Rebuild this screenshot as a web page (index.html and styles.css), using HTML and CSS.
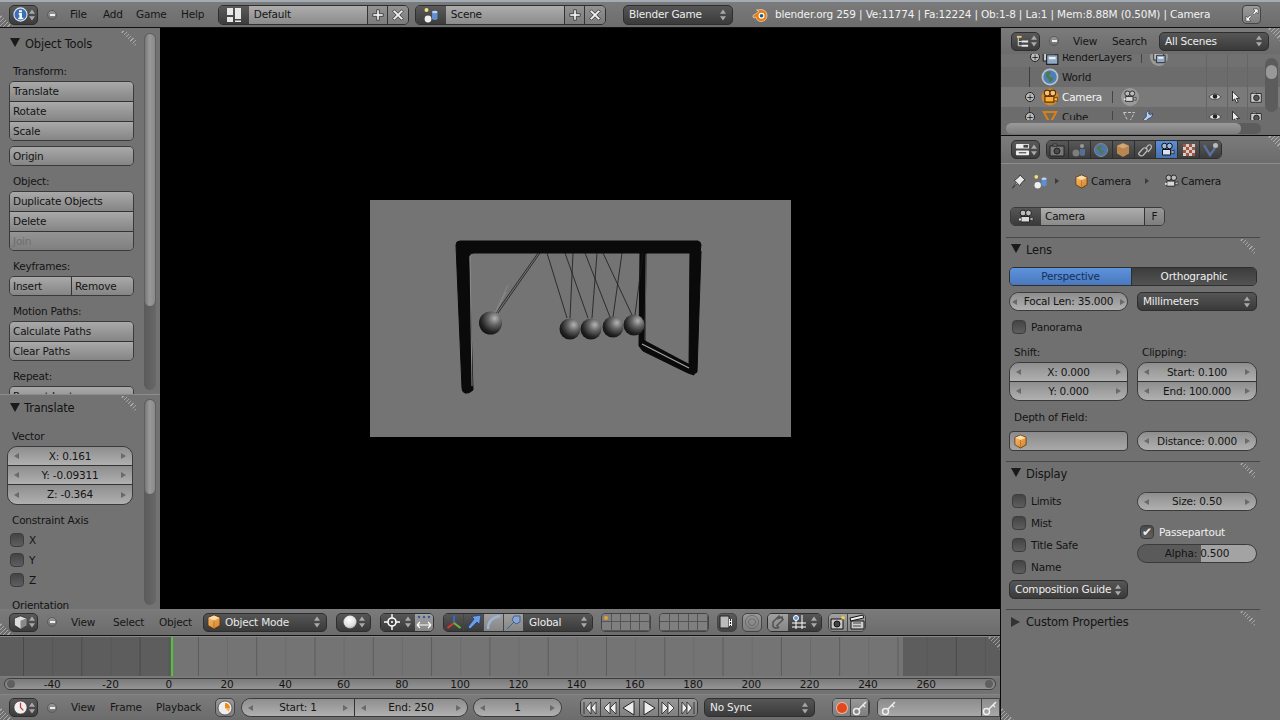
FILE: index.html
```html
<!DOCTYPE html>
<html lang="en">
<head>
<meta charset="utf-8">
<title>Blender</title>
<link rel="stylesheet" href="styles.css">
</head>
<body>
<svg class="defs" width="0" height="0" aria-hidden="true">
  <defs>
    <linearGradient id="gCube" x1="0" y1="0" x2="1" y2="1"><stop offset="0" stop-color="#f6c078"/><stop offset="1" stop-color="#d9801e"/></linearGradient>
    <radialGradient id="gBall" cx=".68" cy=".3" r=".8"><stop offset="0" stop-color="#b4b4b4"/><stop offset=".35" stop-color="#666"/><stop offset=".75" stop-color="#222"/><stop offset="1" stop-color="#0e0e0e"/></radialGradient>
    <radialGradient id="gWhite" cx=".45" cy=".35" r=".7"><stop offset="0" stop-color="#fff"/><stop offset=".7" stop-color="#ddd"/><stop offset="1" stop-color="#999"/></radialGradient>
    <symbol id="ud" viewBox="0 0 8 14"><path d="M4 0.5 7.500 5.500H.5Z M4 13.500 .5 8.500H7.500Z" fill="#a9a9a9"/></symbol>
    <symbol id="plus" viewBox="0 0 16 16"><path d="M6.500 2h3v4.500H14v3H9.500V14h-3V9.500H2v-3h4.500z" fill="#f0f0f0" stroke="#2a2a2a" stroke-width=".9"/></symbol>
    <symbol id="cross" viewBox="0 0 16 16"><path d="M4 2 8 6l4-4 2 2-4 4 4 4-2 2-4-4-4 4-2-2 4-4-4-4z" fill="#f0f0f0" stroke="#2a2a2a" stroke-width=".9"/></symbol>
    <symbol id="info" viewBox="0 0 16 16"><circle cx="8" cy="8" r="7" fill="#3d6fb5" stroke="#dfe7f2" stroke-width="1.200"/><path d="M6.500 3.500h3v2h-3z M6 6.500h3.500v5H11V13H5.600v-1.500h1.200V8H6z" fill="#fff"/></symbol>
    <symbol id="layout" viewBox="0 0 16 16"><path d="M1 1h6v7H1z M9 1h6v11H9z M1 10h6v5H1z M9 13.500h6V15H9z" fill="#e8e8e8"/></symbol>
    <symbol id="scene" viewBox="0 0 16 16"><circle cx="3.500" cy="3" r="2" fill="#f1e27a"/><circle cx="5" cy="12" r="3.400" fill="#f0f0f0"/><path d="M9 5q3-2 5.500 0v7q-2.700 2-5.500 0z" fill="#5f8fd0"/><ellipse cx="11.800" cy="5" rx="2.700" ry="1.300" fill="#bcd3ef"/></symbol>
    <symbol id="cube" viewBox="0 0 16 16"><path d="M8 1 14 3.500V11.500L8 15 2 11.500V3.500Z" fill="url(#gCube)" stroke="#4b3216" stroke-width=".8"/><path d="M2.500 4 8 6.500 13.500 4 8 1.500Z" fill="#fbdca8"/><path d="M8 6.500V14.500" stroke="#a8661c" stroke-width=".7"/></symbol>
    <symbol id="cam" viewBox="0 0 16 16"><circle cx="5" cy="4" r="2.900" fill="#bbb" stroke="#222"/><circle cx="10.500" cy="4" r="2.900" fill="#bbb" stroke="#222"/><path d="M3 7.500h8.500v5.500H3z" fill="#d8d8d8" stroke="#222"/><path d="M11.500 9.500 15 8v4l-3.500-1.500z" fill="#bbb" stroke="#222" stroke-width=".7"/><path d="M1 9.500h2v2H1z" fill="#ddd"/></symbol>
    <symbol id="camo" viewBox="0 0 16 16"><circle cx="8" cy="8" r="7.500" fill="#d98a2c"/><circle cx="5.500" cy="4.500" r="2.600" fill="#f7c27a" stroke="#5b3305"/><circle cx="10.500" cy="4.500" r="2.600" fill="#f7c27a" stroke="#5b3305"/><path d="M3.500 7.500h8v5h-8z" fill="#fbb03c" stroke="#5b3305"/><path d="M11.500 9 14.500 8v4l-3-1z" fill="#fbb03c" stroke="#5b3305" stroke-width=".7"/></symbol>
    <symbol id="camb" viewBox="0 0 16 16"><circle cx="5.500" cy="4" r="2.800" fill="#9db9de" stroke="#111"/><circle cx="10.500" cy="4" r="2.800" fill="#9db9de" stroke="#111"/><path d="M3.500 7.500h8v5.500h-8z" fill="#d7e3f3" stroke="#111"/><path d="M11.500 9.500 15 8v4l-3.500-1.500z" fill="#bbb" stroke="#111" stroke-width=".7"/></symbol>
    <symbol id="world" viewBox="0 0 16 16"><circle cx="8" cy="8" r="7.500" fill="#b9c0cc"/><circle cx="8" cy="8" r="6" fill="#4d80b8"/><path d="M5 3.500q3-1 4 1l-2 1.500 1 2 3 1-1.500 3-2 .5-1-3-2.500-2z" fill="#4f7a47"/></symbol>
    <symbol id="rl" viewBox="0 0 16 16"><path d="M2 2.500h11v9H2z" fill="#c9c9c9" stroke="#222"/><path d="M5 6h10v8.500H5z" fill="#8ea8c7" stroke="#222"/><path d="M7 8h6v2H7z" fill="#eee"/></symbol>
    <symbol id="eye" viewBox="0 0 16 16"><path d="M1 8q7-7 14 0q-7 6-14 0z" fill="#eee" stroke="#222" stroke-width=".7"/><circle cx="8" cy="7.500" r="2.600" fill="#222"/></symbol>
    <symbol id="cursor" viewBox="0 0 16 16"><path d="M4 1.500v11l2.500-2.500 2 4.500 2-1-2-4h3.500z" fill="#eee" stroke="#111" stroke-width=".9"/></symbol>
    <symbol id="rend" viewBox="0 0 16 16"><path d="M2 4h12v10H2z" fill="#cfcfcf" stroke="#222"/><path d="M4 2.500h4V4H4z" fill="#cfcfcf" stroke="#222" stroke-width=".6"/><circle cx="8.500" cy="9" r="3.200" fill="#555" stroke="#222"/></symbol>
    <symbol id="tri" viewBox="0 0 16 16"><path d="M2.500 3.500h11L8 14z" fill="#8a6a3a" fill-opacity=".35" stroke="#d9801e" stroke-width="1.800"/></symbol>
    <symbol id="triw" viewBox="0 0 16 16"><path d="M2.500 3.500h11L8 14z" fill="none" stroke="#c8c8c8" stroke-width="1" stroke-dasharray="3 1.500"/></symbol>
    <symbol id="wrench" viewBox="0 0 16 16"><path d="M3 14.500 9.500 7q-1.500-4 3-5.500l-1 3 2 1.500 2-2q.5 4.500-4 5.500L5 15.500z" fill="#b8d0ef" stroke="#23406b" stroke-width=".8"/></symbol>
    <symbol id="pin" viewBox="0 0 16 16"><path d="M1.500 15 6 9 3.500 6.500 5.500 5.500 9 2.500 9.500 1 15 6.500 13.500 7 10.500 10.500 9.500 12.500 7 10z" fill="#e8e8e8" stroke="#222" stroke-width=".8"/></symbol>
    <symbol id="fs" viewBox="0 0 16 16"><path d="M9 2h5v5l-1.700-1.700-2.300 2.300-1.300-1.300 2.300-2.300z M2 14V9l1.700 1.700 2.300-2.300 1.300 1.300-2.300 2.300L7 14z" fill="#fff" stroke="#222" stroke-width=".5"/></symbol>
    <symbol id="logo" viewBox="0 0 16 16"><path d="M1 8.500 7 4.500 4.500 3 9.500 2.500Q15 3.500 15 9 14.500 14 9.500 14.500 4.500 14.500 4 10L2 11Q.5 10.500 1 8.500z" fill="#e87d0d" stroke="#fff" stroke-width=".5"/><circle cx="9.500" cy="8.800" r="3" fill="#fff"/><circle cx="9.500" cy="8.800" r="1.800" fill="#265787"/></symbol>
    <symbol id="outl" viewBox="0 0 16 16"><path d="M2 2h5v2H2z" fill="#f0c878"/><path d="M3.500 4v8.500M3.500 8H7M3.500 12.500H7" stroke="#ddd" fill="none"/><path d="M7 7h7v2H7z M7 11.500h7v2H7z" fill="#e8e8e8"/></symbol>
    <symbol id="props" viewBox="0 0 16 16"><rect x="1" y="2" width="14" height="5" rx="1" fill="#eee"/><rect x="9" y="3" width="5" height="3" fill="#444"/><rect x="1" y="9" width="14" height="5" rx="1" fill="#eee"/><path d="M4 11.500h8" stroke="#222"/></symbol>
    <symbol id="view3d" viewBox="0 0 16 16"><path d="M8 1 14.500 3.500V11L8 15 1.500 11V3.500Z" fill="#ddd" stroke="#222" stroke-width=".7"/><path d="M8 6V15L14.500 11V3.500Z" fill="#888"/></symbol>
    <symbol id="clock" viewBox="0 0 16 16"><circle cx="8" cy="8" r="7" fill="#efefef" stroke="#333" stroke-width=".7"/><path d="M8 3v5l3 3" stroke="#c33" fill="none" stroke-width="1.300"/></symbol>
    <symbol id="ball" viewBox="0 0 16 16"><circle cx="8" cy="8" r="6.500" fill="url(#gWhite)"/></symbol>
    <symbol id="pivot" viewBox="0 0 16 16"><circle cx="8" cy="8" r="4" fill="none" stroke="#fff" stroke-width="1.600"/><path d="M8 0v4M8 12v4M0 8h4M12 8h4" stroke="#fff" stroke-width="1.400"/><circle cx="8" cy="8" r="1" fill="#fff"/></symbol>
    <symbol id="around" viewBox="0 0 16 16"><circle cx="3" cy="3" r="1.300" fill="#3a5d96"/><circle cx="8" cy="3" r="1.300" fill="#3a5d96"/><circle cx="13" cy="3" r="1.300" fill="#3a5d96"/><path d="M1 11h14M1 11l3-3M1 11l3 3M15 11l-3-3M15 11l-3 3" stroke="#fff" stroke-width="1.200" fill="none"/></symbol>
    <symbol id="axes" viewBox="0 0 16 16"><path d="M8 9V1.500" stroke="#3569c8" stroke-width="2"/><path d="M8 9 1.500 14" stroke="#d83a2c" stroke-width="2"/><path d="M8 9l6.500 5" stroke="#6fb53a" stroke-width="2"/></symbol>
    <symbol id="arrow" viewBox="0 0 16 16"><path d="M2 13l2 2 7-7 2.500 2.500L15 1 5.500 2.500 8 5z" fill="#6f9be0" stroke="#1d3d75" stroke-width=".8"/></symbol>
    <symbol id="arc" viewBox="0 0 16 16"><path d="M2 15Q2 4 14 2" fill="none" stroke="#9bb4d8" stroke-width="2.400"/></symbol>
    <symbol id="scale" viewBox="0 0 16 16"><path d="M1 15 8 8 6 6 8 2 14 2 14 8 10 10 8 8" fill="#87a6d6" stroke="#43618f"/></symbol>
    <symbol id="laylink" viewBox="0 0 16 16"><path d="M1 2h9v12H1z" fill="#bbb" stroke="#222"/><path d="M11.500 5v7" stroke="#fff" stroke-width="3"/><path d="M11.500 5v7" stroke="#222" stroke-width="1.200" stroke-dasharray="2 1"/></symbol>
    <symbol id="prop" viewBox="0 0 16 16"><circle cx="8" cy="8" r="6.500" fill="none" stroke="#6a6a6a"/><circle cx="8" cy="8" r="3.500" fill="none" stroke="#6a6a6a"/></symbol>
    <symbol id="magnet" viewBox="0 0 16 16"><path d="M3 8 9 2l4 3.500-6 6 1.500 2Q5 15 3 12.500z M7 5l5-2 1 3" fill="none" stroke="#555" stroke-width="1.600"/></symbol>
    <symbol id="snap" viewBox="0 0 16 16"><path d="M5 1v14M11 1v14M1 9h14M1 13h14" stroke="#fff"/><circle cx="5" cy="4" r="2.500" fill="#6a95d6" stroke="#fff"/></symbol>
    <symbol id="rcam" viewBox="0 0 16 16"><path d="M1 5h12v10H1z" fill="#c8c8c8" stroke="#111"/><circle cx="7" cy="10" r="3" fill="#444" stroke="#111"/><path d="M13 1l.8 1.700 1.700.3-1.300 1.300.3 1.700-1.500-.9-1.500.9.300-1.700L10.500 3l1.700-.3z" fill="#f5d24a"/></symbol>
    <symbol id="clap" viewBox="0 0 16 16"><path d="M2 7h13v8H2z" fill="#ccc" stroke="#111"/><path d="M1 4 14 1l.7 3L1.700 7z" fill="#eee" stroke="#111"/><path d="M4 9h8M4 12h8" stroke="#444"/></symbol>
    <symbol id="key" viewBox="0 0 16 16"><circle cx="4.500" cy="11.500" r="3" fill="none" stroke="#eee" stroke-width="1.500"/><path d="M6.500 9.500 14 2M11 5l2 2" stroke="#eee" stroke-width="1.500" fill="none"/></symbol>
    <symbol id="keying" viewBox="0 0 16 16"><circle cx="8" cy="8" r="7" fill="#eee" stroke="#333" stroke-width=".7"/><path d="M8 3a5 5 0 0 1 5 5H8z" fill="#e88b1a"/><path d="M8 8h5a5 5 0 0 1-1.500 3.500z" fill="#f3b45a"/></symbol>
    <symbol id="t-render" viewBox="0 0 16 16"><path d="M1 4h14v10H1z" fill="#7a7a7a" stroke="#222"/><path d="M4 2h4v2H4z" fill="#7a7a7a" stroke="#222" stroke-width=".7"/><circle cx="8" cy="9" r="3" fill="#4a4a4a" stroke="#222"/></symbol>
    <symbol id="t-layers" viewBox="0 0 16 16"><circle cx="11" cy="4" r="2" fill="#999"/><circle cx="5" cy="11" r="3.500" fill="#7e7e7e"/><path d="M9 7h5v6q-2.500 2-5 0z" fill="#566e94"/></symbol>
    <symbol id="t-world" viewBox="0 0 16 16"><circle cx="8" cy="8" r="6.500" fill="#4d77a8" stroke="#888"/><path d="M5 4q3-1 4 1l-2 1 1 2 3 1-1.500 3-2 0-1-3-2.500-2z" fill="#56754f"/></symbol>
    <symbol id="t-obj" viewBox="0 0 16 16"><path d="M8 1 14 3.500V11.500L8 15 2 11.500V3.500Z" fill="#b98650"/><path d="M2.500 4 8 6.500 13.500 4 8 1.500Z" fill="#d2a877"/></symbol>
    <symbol id="t-link" viewBox="0 0 16 16"><path d="M2 11 6 6.500q2-1.500 3.500 0t0 3L6 13.500q-2 1-3.500-.5T2 11z M8.500 7 11 3.500q2-1.500 3 0t0 3L11 10" fill="none" stroke="#bcbcbc" stroke-width="1.200"/></symbol>
    <symbol id="t-tex" viewBox="0 0 16 16"><path d="M2 2h12v12H2z" fill="#cfcfcf"/><path d="M2 2h3v3H2z M8 2h3v3H8z M5 5h3v3H5z M11 5h3v3h-3z M2 8h3v3H2z M8 8h3v3H8z M5 11h3v3H5z M11 11h3v3h-3z" fill="#a8553f"/></symbol>
    <symbol id="t-part" viewBox="0 0 16 16"><path d="M1 3 7 13 12 6" fill="none" stroke="#5a6ea0" stroke-width="2.400"/><circle cx="12.500" cy="3.500" r="2.500" fill="#bbb"/></symbol>
    <symbol id="tstart" viewBox="0 0 16 16"><path d="M2 2v12M14 2 9 8l5 6zM9 2 4 8l5 6z" fill="#eee" stroke="#222" stroke-width=".8"/></symbol>
    <symbol id="tback" viewBox="0 0 16 16"><path d="M8 2 2 8l6 6zM14 2 8 8l6 6z" fill="#eee" stroke="#222" stroke-width=".8"/></symbol>
    <symbol id="tprev" viewBox="0 0 16 16"><path d="M13 1 2 8l11 7z" fill="#eee" stroke="#222"/></symbol>
    <symbol id="tnext" viewBox="0 0 16 16"><path d="M3 1l11 7-11 7z" fill="#eee" stroke="#222"/></symbol>
    <symbol id="tfwd" viewBox="0 0 16 16"><path d="M8 2l6 6-6 6zM2 2l6 6-6 6z" fill="#eee" stroke="#222" stroke-width=".8"/></symbol>
    <symbol id="tend" viewBox="0 0 16 16"><path d="M14 2v12M2 2l5 6-5 6zM7 2l5 6-5 6z" fill="#eee" stroke="#222" stroke-width=".8"/></symbol>
  </defs>
</svg>

<div class="app">
  <header class="hdr top">
    <span class="hatch corner"></span>
    <div class="sel"><svg class="ic"><use href="#info"/></svg><svg class="ud"><use href="#ud"/></svg></div>
    <span class="minus"></span>
    <nav class="menus">
      <span class="m w33">File</span><span class="m w33">Add</span><span class="m w45">Game</span><span class="m w37">Help</span>
    </nav>
    <div class="dbgroup">
      <span class="dbico"><svg class="ic"><use href="#layout"/></svg></span><span class="dbname">Default</span><span class="dbbtn"><svg class="ic"><use href="#plus"/></svg></span><span class="dbbtn end"><svg class="ic"><use href="#cross"/></svg></span>
    </div>
    <div class="dbgroup scene">
      <span class="dbico"><svg class="ic"><use href="#scene"/></svg></span><span class="dbname">Scene</span><span class="dbbtn"><svg class="ic"><use href="#plus"/></svg></span><span class="dbbtn end"><svg class="ic"><use href="#cross"/></svg></span>
    </div>
    <div class="dd engine"><span>Blender Game</span><svg class="ud"><use href="#ud"/></svg></div>
    <svg class="ic logo"><use href="#logo"/></svg>
    <span class="stats">blender.org 259 | Ve:11774 | Fa:12224 | Ob:1-8 | La:1 | Mem:8.88M (0.50M) | Camera</span>
    <span class="fsbtn"><svg class="ic"><use href="#fs"/></svg></span>
  </header>

  <main class="main">
    <section class="left">
      <div class="view">
        <aside class="tools">
          <div class="tpanel tp1">
            <div class="tcontent">
              <div class="ptitle"><i class="tdown"></i>Object Tools<span class="hatch phatch"></span></div>
              <div class="lbl lfirst">Transform:</div>
              <div class="bgroup"><div class="b">Translate</div><div class="b">Rotate</div><div class="b">Scale</div></div>
              <div class="bgroup sp5"><div class="b">Origin</div></div>
              <div class="lbl sp5">Object:</div>
              <div class="bgroup"><div class="b">Duplicate Objects</div><div class="b">Delete</div><div class="b off">Join</div></div>
              <div class="lbl sp5">Keyframes:</div>
              <div class="bgroup bh"><div class="b">Insert</div><div class="b">Remove</div></div>
              <div class="lbl sp5">Motion Paths:</div>
              <div class="bgroup"><div class="b">Calculate Paths</div><div class="b">Clear Paths</div></div>
              <div class="lbl sp5">Repeat:</div>
              <div class="bgroup"><div class="b">Repeat Last</div></div>
            </div>
            <div class="vtrack t1"><div class="vthumb th1"></div></div>
          </div>
          <div class="tpanel tp2">
            <div class="tcontent">
              <div class="ptitle pt2"><i class="tdown"></i>Translate<span class="hatch phatch"></span></div>
              <div class="lbl vec lfirst">Vector</div>
              <div class="numg vecg">
                <div class="num"><i class="la"></i><span>X: 0.161</span><i class="ra"></i></div>
                <div class="num"><i class="la"></i><span>Y: -0.09311</span><i class="ra"></i></div>
                <div class="num"><i class="la"></i><span>Z: -0.364</span><i class="ra"></i></div>
              </div>
              <div class="lbl vec sp5">Constraint Axis</div>
              <label class="chk tchk"><i class="box"></i>X</label>
              <label class="chk tchk"><i class="box"></i>Y</label>
              <label class="chk tchk"><i class="box"></i>Z</label>
              <div class="lbl vec sp5">Orientation</div>
            </div>
            <div class="vtrack t2"><div class="vthumb th2"></div></div>
          </div>
        </aside>
        <div class="canvas">
          <svg class="render" viewBox="370 200 421 237" width="421" height="237">
            <g fill="#0a0a0a" stroke="#0a0a0a" stroke-width="1" stroke-linejoin="round">
              <path d="M456 245Q456 241 460 241H698Q701 242 701 245L700 253H474Q469 253 469 258L473 390Q469 394 465 393 462 392 462 388Z"/>
              <path d="M690 251H701L697 372 694 374 689 372Z"/>
              <path d="M640 252H646L645 341 692 366 694 375 688 373 643 351 639 346Z"/>
            </g>
            <path d="M470 256 472 386" stroke="#8e8e8e" fill="none"/>
            <path d="M642 344 689 368" stroke="#a5a5a5" fill="none" stroke-width="1.200"/>
            <path d="M646 254 645 340" stroke="#555" fill="none"/>
            <g stroke="#1a1a1a" stroke-width=".8" fill="none">
              <path d="M540 253 498 313M538 253 495 314M547 253 567 318M573 253 570 318M565 253 588 318M597 253 592 318M585 253 610 317M622 253 613 317M603 253 632 315M643 253 635 315"/>
              <path d="M508 285 495 313M506 292 496 312" stroke="#8d8d8d"/>
            </g>
            <circle cx="490.500" cy="323" r="11.500" fill="url(#gBall)"/>
            <circle cx="570" cy="329" r="10.500" fill="url(#gBall)"/>
            <circle cx="591" cy="329" r="10.500" fill="url(#gBall)"/>
            <circle cx="613" cy="327" r="10.500" fill="url(#gBall)"/>
            <circle cx="634" cy="325" r="10.500" fill="url(#gBall)"/>
          </svg>
        </div>
      </div>

      <div class="hdr h3d">
        <span class="hatch corner"></span>
        <div class="sel"><svg class="ic"><use href="#view3d"/></svg><svg class="ud"><use href="#ud"/></svg></div>
        <span class="minus"></span>
        <nav class="menus m14">
          <span class="m w42">View</span><span class="m w46">Select</span><span class="m w44">Object</span>
        </nav>
        <div class="dd objmode"><svg class="ic"><use href="#cube"/></svg><span>Object Mode</span><svg class="ud"><use href="#ud"/></svg></div>
        <div class="dd shade"><svg class="ic"><use href="#ball"/></svg><svg class="ud"><use href="#ud"/></svg></div>
        <div class="pivotg">
          <span class="dark pv"><svg class="ic"><use href="#pivot"/></svg><svg class="ud"><use href="#ud"/></svg></span><span class="lt"><svg class="ic"><use href="#around"/></svg></span>
        </div>
        <div class="mani">
          <span class="dark ms"><svg class="ic"><use href="#axes"/></svg></span><span class="dark ms"><svg class="ic"><use href="#arrow"/></svg></span><span class="lt ms"><svg class="ic"><use href="#arc"/></svg></span><span class="lt ms"><svg class="ic"><use href="#scale"/></svg></span><span class="dark gl"><span>Global</span><svg class="ud"><use href="#ud"/></svg></span>
        </div>
        <div class="layers l1"><i class="on"></i><i></i><i></i><i></i><i></i><i></i><i></i><i></i><i></i><i></i></div>
        <div class="layers l2"><i></i><i></i><i></i><i></i><i></i><i></i><i></i><i></i><i></i><i></i></div>
        <span class="sq dsq linkb"><svg class="ic"><use href="#laylink"/></svg></span>
        <span class="sq propb"><svg class="ic"><use href="#prop"/></svg></span>
        <div class="snapg">
          <span class="lt sn"><svg class="ic"><use href="#magnet"/></svg></span><span class="dark sn2"><svg class="ic"><use href="#snap"/></svg><svg class="ud"><use href="#ud"/></svg></span>
        </div>
        <div class="renderg">
          <span class="lt sn"><svg class="ic"><use href="#rcam"/></svg></span><span class="lt sn"><svg class="ic"><use href="#clap"/></svg></span>
        </div>
      </div>

      <div class="timeline"><span class="playhead"></span><span class="hatch tlcorner"></span></div>
      <div class="ruler">
        <div class="rbar"></div>
        <div class="rlabels">
          <span>-40</span><span>-20</span><span>0</span><span>20</span><span>40</span><span>60</span><span>80</span><span>100</span><span>120</span><span>140</span><span>160</span><span>180</span><span>200</span><span>220</span><span>240</span><span>260</span>
        </div>
      </div>

      <div class="hdr htime">
        <span class="hatch corner"></span>
        <div class="sel"><svg class="ic"><use href="#clock"/></svg><svg class="ud"><use href="#ud"/></svg></div>
        <span class="minus"></span>
        <nav class="menus m14">
          <span class="m w39">View</span><span class="m w46">Frame</span><span class="m w59">Playback</span>
        </nav>
        <span class="sq keying"><svg class="ic"><use href="#keying"/></svg></span>
        <div class="numh range">
          <div class="num"><i class="la"></i><span>Start: 1</span><i class="ra"></i></div>
          <div class="num"><i class="la"></i><span>End: 250</span><i class="ra"></i></div>
        </div>
        <div class="numh cur">
          <div class="num"><i class="la"></i><span>1</span><i class="ra"></i></div>
        </div>
        <div class="transport">
          <span><svg><use href="#tstart"/></svg></span><span><svg><use href="#tback"/></svg></span><span><svg><use href="#tprev"/></svg></span><span><svg><use href="#tnext"/></svg></span><span><svg><use href="#tfwd"/></svg></span><span><svg><use href="#tend"/></svg></span>
        </div>
        <div class="dd sync"><span>No Sync</span><svg class="ud"><use href="#ud"/></svg></div>
        <div class="recg">
          <span class="rec"><i></i></span><span class="rec"><svg class="ic"><use href="#key"/></svg></span>
        </div>
        <div class="keyf"><span class="kname"><svg class="ic"><use href="#key"/></svg></span><span class="kend"><svg class="ic"><use href="#key"/></svg></span></div>
      </div>
    </section>

    <section class="right">
      <div class="hdr outh">
        <span class="hatch rcorner"></span>
        <div class="sel"><svg class="ic"><use href="#outl"/></svg><svg class="ud"><use href="#ud"/></svg></div>
        <span class="minus"></span>
        <nav class="menus m14">
          <span class="m w39">View</span><span class="m w47">Search</span>
        </nav>
        <div class="dd scenes"><span>All Scenes</span><svg class="ud"><use href="#ud"/></svg></div>
      </div>
      <div class="tree">
        <div class="trow first">
          <span class="exp e2"></span><svg class="ic"><use href="#rl"/></svg><span class="nm">RenderLayers</span><span class="ex"><i class="sepv"></i><span class="halo"><svg class="ic"><use href="#rl"/></svg></span></span><span class="rc"></span><span class="rc"></span><span class="rc"></span>
        </div>
        <div class="trow alt">
          <span class="exp none"></span><svg class="ic"><use href="#world"/></svg><span class="nm">World</span><span class="ex"></span><span class="rc"></span><span class="rc"></span><span class="rc"></span>
        </div>
        <div class="trow act">
          <span class="exp"></span><svg class="ic"><use href="#camo"/></svg><span class="nm wh">Camera</span><span class="ex"><i class="sepv"></i><span class="halo"><svg class="ic"><use href="#cam"/></svg></span></span><span class="rc"><svg class="ic sm"><use href="#eye"/></svg></span><span class="rc"><svg class="ic sm"><use href="#cursor"/></svg></span><span class="rc"><svg class="ic sm"><use href="#rend"/></svg></span>
        </div>
        <div class="trow alt">
          <span class="exp"></span><svg class="ic"><use href="#tri"/></svg><span class="nm">Cube</span><span class="ex"><i class="sepv"></i><svg class="ic mesh"><use href="#triw"/></svg><svg class="ic"><use href="#wrench"/></svg></span><span class="rc"><svg class="ic sm"><use href="#eye"/></svg></span><span class="rc"><svg class="ic sm"><use href="#cursor"/></svg></span><span class="rc"><svg class="ic sm"><use href="#rend"/></svg></span>
        </div>
        <div class="treescroll"><i></i></div>
      </div>
      <div class="hbar"><div class="hthumb"></div></div>
      <div class="hdr proph">
        <span class="hatch rcorner"></span>
        <div class="sel"><svg class="ic"><use href="#props"/></svg><svg class="ud"><use href="#ud"/></svg></div>
        <div class="tabs">
          <span><svg class="ic"><use href="#t-render"/></svg></span><span><svg class="ic"><use href="#t-layers"/></svg></span><span><svg class="ic"><use href="#t-world"/></svg></span><span><svg class="ic"><use href="#t-obj"/></svg></span><span><svg class="ic"><use href="#t-link"/></svg></span><span class="act"><svg class="ic"><use href="#camb"/></svg></span><span><svg class="ic"><use href="#t-tex"/></svg></span><span><svg class="ic"><use href="#t-part"/></svg></span>
        </div>
      </div>
      <div class="props">
        <div class="crumbs">
          <svg class="ic pinp"><use href="#pin"/></svg>
          <svg class="ic scn"><use href="#scene"/></svg>
          <i class="crumbarrow a1"></i>
          <svg class="ic cb"><use href="#cube"/></svg><span class="cname c1">Camera</span>
          <i class="crumbarrow a2"></i>
          <svg class="ic cb2"><use href="#cam"/></svg><span class="cname">Camera</span>
        </div>
        <div class="namerow">
          <span class="nico"><svg class="ic"><use href="#cam"/></svg></span><span class="nfield">Camera</span><span class="nf">F</span>
        </div>

        <div class="panel">
          <div class="ptitle pr"><i class="tdown"></i>Lens<span class="hatch phatch2"></span></div>
          <div class="seg">
            <span class="s-on">Perspective</span><span class="s-off">Orthographic</span>
          </div>
          <div class="cols c6">
            <div class="numg pill"><div class="num tight"><i class="la"></i><span>Focal Len: 35.000</span><i class="ra"></i></div></div>
            <div class="dd full"><span>Millimeters</span><svg class="ud"><use href="#ud"/></svg></div>
          </div>
          <label class="chk pano"><i class="box"></i>Panorama</label>
          <div class="cols c5">
            <div class="plbl">Shift:</div><div class="plbl">Clipping:</div>
          </div>
          <div class="cols">
            <div class="numg duo"><div class="num"><i class="la"></i><span>X: 0.000</span><i class="ra"></i></div><div class="num"><i class="la"></i><span>Y: 0.000</span><i class="ra"></i></div></div>
            <div class="numg duo"><div class="num"><i class="la"></i><span>Start: 0.100</span><i class="ra"></i></div><div class="num"><i class="la"></i><span>End: 100.000</span><i class="ra"></i></div></div>
          </div>
          <div class="plbl dof">Depth of Field:</div>
          <div class="cols c4">
            <div class="objf"><svg class="ic"><use href="#cube"/></svg></div>
            <div class="numg pill p20"><div class="num"><i class="la"></i><span>Distance: 0.000</span><i class="ra"></i></div></div>
          </div>
        </div>

        <div class="panel disp">
          <div class="ptitle pr"><i class="tdown"></i>Display<span class="hatch phatch2"></span></div>
          <div class="cols c8">
            <div class="colv">
              <label class="chk r22"><i class="box"></i>Limits</label>
              <label class="chk r22"><i class="box"></i>Mist</label>
              <label class="chk r22"><i class="box"></i>Title Safe</label>
              <label class="chk r22"><i class="box"></i>Name</label>
              <div class="dd full comp"><span>Composition Guide</span><svg class="ud"><use href="#ud"/></svg></div>
            </div>
            <div class="colv cr">
              <div class="numg pill"><div class="num"><i class="la"></i><span>Size: 0.50</span><i class="ra"></i></div></div>
              <label class="chk pass"><i class="box chkd">&#x2714;</i>Passepartout</label>
              <div class="alpha">Alpha: 0.500</div>
            </div>
          </div>
        </div>

        <div class="panel cust">
          <div class="ptitle pr"><i class="tright"></i>Custom Properties<span class="hatch phatch2"></span></div>
        </div>
        <span class="hatch corner"></span>
      </div>
    </section>
  </main>
</div>
</body>
</html>
```
FILE: styles.css
```css
* { box-sizing: border-box; }
html, body { margin: 0; padding: 0; }
body { width: 1280px; height: 720px; overflow: hidden; background: #727272; font: 10.500px/1 "DejaVu Sans", "Liberation Sans", sans-serif; letter-spacing: -.2px; color: #141414; }
.defs { position: absolute; }
.app { display: flex; flex-direction: column; width: 1280px; height: 720px; }
.main { display: flex; height: 692px; }
.left { width: 1000px; display: flex; flex-direction: column; }
.right { width: 280px; border-left: 1px solid #0c0c0c; position: relative; background: #707070; display: flex; flex-direction: column; }
.ic { width: 16px; height: 16px; flex: none; display: block; }
.ic.sm { width: 14px; height: 14px; }
.ud { width: 8px; height: 12px; flex: none; display: block; }

/* headers */
.hdr { display: flex; align-items: center; position: relative; padding-left: 9px; background: linear-gradient(#7b7b7b, #6c6c6c); border-bottom: 1px solid #111; flex: none; }
.top { height: 28px; border-top: 2px solid #a3abb4; }
.h3d { height: 27px; }
.htime { height: 26px; border-bottom: 0; border-top: 1px solid #858585; }
.outh { height: 26px; border-bottom: 0; padding-left: 10px; }
.proph { height: 28px; padding-left: 10px; border-bottom: 1px solid #8c8c8c; }
.sel { width: 29px; height: 19px; display: flex; align-items: center; justify-content: space-between; padding: 0 1px 0 3px; border: 1px solid #2e2e2e; border-radius: 5px; background: linear-gradient(#5a5a5a, #3c3c3c); flex: none; }
.sel .ic { width: 15px; height: 15px; }
.top .sel, .top .dd, .top .dbgroup { height: 20px; }
.minus { width: 10px; height: 10px; margin-left: 9px; border-radius: 50%; background: linear-gradient(#9a9a9a, #6d6d6d); border: 1px solid #5a5a5a; position: relative; flex: none; }
.minus::after { content: ""; position: absolute; left: 1.500px; right: 1.500px; top: 3px; height: 2px; background: #eee; }
.menus { display: flex; margin-left: 13px; }
.m14 { margin-left: 14px; }
.m { color: #161616; flex: none; }
.w33 { width: 33px; } .w37 { width: 37px; } .w39 { width: 39px; } .w42 { width: 42px; } .w44 { width: 44px; } .w45 { width: 45px; } .w46 { width: 46px; } .w47 { width: 47px; } .w59 { width: 59px; }
.hatch { display: block; background: repeating-linear-gradient(135deg, transparent 0 2px, rgba(235,235,235,.45) 2px 3px); }
.corner { position: absolute; left: 0; bottom: 0; width: 13px; height: 13px; clip-path: polygon(0 0, 100% 100%, 0 100%); }
.rcorner { position: absolute; right: 0; top: 0; width: 13px; height: 13px; clip-path: polygon(0 0, 100% 0, 100% 100%); }

/* top bar */
.dbgroup { display: flex; height: 19px; width: 191px; border: 1px solid #2e2e2e; border-radius: 5px; overflow: hidden; flex: none; }
.scene { margin-left: 6px; }
.dbico { width: 30px; background: linear-gradient(#5a5a5a, #3c3c3c); display: flex; align-items: center; justify-content: center; }
.dbname { width: 120px; background: linear-gradient(#adadad, #8b8b8b); padding-left: 5px; display: flex; align-items: center; border-right: 1px solid #333; }
.dbbtn { width: 20px; background: linear-gradient(#929292, #7c7c7c); display: flex; align-items: center; justify-content: center; border-right: 1px solid #333; }
.dbbtn.end { border-right: 0; }
.dbbtn .ic { width: 14px; height: 14px; }
.dd { height: 19px; display: flex; align-items: center; justify-content: space-between; color: #ededed; padding: 0 5px; border: 1px solid #2e2e2e; border-radius: 5px; background: linear-gradient(#565656, #3a3a3a); flex: none; white-space: nowrap; }
.engine { width: 110px; margin-left: 17px; }
.logo { margin-left: 19px; }
.stats { margin-left: 7px; color: #f1f1f1; width: 436px; white-space: nowrap; flex: none; letter-spacing: -.15px; }
.fsbtn { margin-left: 31px; width: 19px; height: 19px; border: 1px solid #444; border-radius: 4px; background: linear-gradient(#9a9a9a, #7e7e7e); display: flex; align-items: center; justify-content: center; flex: none; }

/* viewport */
.view { display: flex; height: 581px; flex: none; }
.tools { width: 160px; flex: none; display: flex; flex-direction: column; background: #727272; }
.tpanel { display: flex; overflow: hidden; position: relative; }
.tp1 { height: 366px; flex: none; }
.tp2 { height: 215px; flex: none; border-top: 1px solid #8c8c8c; }
.tcontent { width: 144px; flex: none; padding-top: 5px; }
.tp2 .tcontent { padding-top: 3px; }
.ptitle { position: relative; height: 20px; display: flex; align-items: center; padding-left: 25px; padding-top: 3px; font-size: 11.500px; letter-spacing: -.2px; }
.tp2 .ptitle { padding-top: 2px; }
.tdown { position: absolute; left: 10px; top: 5px; border: 5px solid transparent; border-top: 9px solid #1a1a1a; border-bottom: 0; }
.tright { position: absolute; left: 5px; top: 6px; border: 5px solid transparent; border-left: 9px solid #333; border-right: 0; }
.pt2 { padding-left: 24px; }
.phatch { position: absolute; left: 120px; top: -2px; width: 16px; height: 16px; clip-path: polygon(0 0, 40% 0, 100% 60%, 100% 100%); }
.phatch2 { position: absolute; right: 2px; top: 0; width: 16px; height: 16px; clip-path: polygon(0 0, 40% 0, 100% 60%, 100% 100%); }
.lbl { height: 20px; display: flex; align-items: center; padding-left: 13px; }
.lfirst { margin-top: 8px; }
.vec { padding-left: 12px; }
.sp5 { margin-top: 5px; }
.bgroup { margin-left: 9px; width: 125px; border: 1px solid #3a3a3a; border-radius: 5px; overflow: hidden; }
.b { height: 20px; padding-left: 3px; display: flex; align-items: center; background: linear-gradient(#a9a9a9, #858585); border-bottom: 1px solid #333; }
.b:last-child { border-bottom: 0; height: 18px; }
.b.off { color: #6e6e6e; background: linear-gradient(#949494, #7f7f7f); }
.bh { display: flex; }
.bh .b { width: 62px; height: 18px; border-bottom: 0; border-right: 1px solid #333; }
.bh .b:last-child { border-right: 0; flex: 1; padding-left: 3px; }
.vtrack { width: 12px; flex: none; border-radius: 6px; background: linear-gradient(to right, #5a5a5a, #686868); margin-top: 5px; }
.t1 { height: 357px; }
.t2 { height: 206px; margin-top: 4px; }
.vthumb { border-radius: 6px; background: linear-gradient(to right, #787878, #999 45%, #8a8a8a); border: 1px solid #5f5f5f; }
.th1 { height: 274px; }
.th2 { height: 96px; }
.numg { border: 1px solid #3a3a3a; border-radius: 10px; overflow: hidden; }
.vecg { margin-left: 7px; width: 126px; height: 59px; }
.num { height: 19px; display: flex; align-items: center; justify-content: space-between; padding: 0 6px; background: linear-gradient(#8e8e8e, #b0b0b0); border-bottom: 1px solid #333; }
.num:last-child { border-bottom: 0; }
.la { border: 3.500px solid transparent; border-right: 5px solid #6a6a6a; border-left: 0; flex: none; }
.ra { border: 3.500px solid transparent; border-left: 5px solid #6a6a6a; border-right: 0; flex: none; }
.tight { padding: 0 2px; }
.chk { display: flex; align-items: center; height: 20px; }
.box { width: 14px; height: 14px; border-radius: 4px; border: 1px solid #3c3c3c; background: linear-gradient(#444, #5e5e5e); margin-right: 5px; flex: none; display: flex; align-items: center; justify-content: center; color: #eee; font-style: normal; font-size: 12px; }
.tchk { padding-left: 10px; }
.canvas { flex: 1; background: #000; display: flex; align-items: center; justify-content: center; }
.render { background: #747474; display: block; }

/* 3D header */
.objmode { width: 124px; margin-left: 0; padding-left: 2px; color: #e8e8e8; }
.objmode span { flex: 1; margin-left: 3px; }
.shade { width: 35px; margin-left: 9px; }
.pivotg { display: flex; margin-left: 9px; width: 54px; height: 19px; border: 1px solid #2e2e2e; border-radius: 5px; overflow: hidden; flex: none; }
.dark { background: linear-gradient(#565656, #3a3a3a); display: flex; align-items: center; }
.lt { background: linear-gradient(#a0a0a0, #868686); display: flex; align-items: center; justify-content: center; }
.pv { width: 34px; justify-content: space-between; padding: 0 3px; }
.pivotg .lt { flex: 1; }
.mani { display: flex; margin-left: 9px; width: 150px; height: 19px; border: 1px solid #2e2e2e; border-radius: 5px; overflow: hidden; flex: none; }
.ms { width: 20px; justify-content: center; display: flex; align-items: center; border-right: 1px solid #444; }
.gl { flex: 1; justify-content: space-between; color: #ededed; padding: 0 4px 0 5px; }
.layers { display: grid; grid-template-columns: repeat(5, 1fr); grid-template-rows: repeat(2, 1fr); width: 50px; height: 19px; border: 1px solid #444; border-radius: 4px; overflow: hidden; flex: none; }
.layers i { background: #7f7f7f; border-right: 1px solid #555; border-bottom: 1px solid #555; position: relative; }
.layers i.on::after { content: ""; position: absolute; left: 2px; top: 2px; width: 4px; height: 4px; border-radius: 50%; background: #e5a03a; }
.l1 { margin-left: 8px; }
.l2 { margin-left: 8px; }
.sq { width: 20px; height: 19px; border: 1px solid #444; border-radius: 5px; background: linear-gradient(#989898, #7e7e7e); display: flex; align-items: center; justify-content: center; flex: none; }
.dsq { background: linear-gradient(#5a5a5a, #444); }
.linkb { margin-left: 8px; }
.propb { margin-left: 5px; }
.snapg { display: flex; margin-left: 5px; width: 55px; height: 19px; border: 1px solid #2e2e2e; border-radius: 5px; overflow: hidden; flex: none; }
.sn { width: 20px; flex: none; }
.sn2 { flex: 1; justify-content: space-between; padding: 0 3px; }
.renderg { display: flex; margin-left: 6px; width: 38px; height: 19px; border: 1px solid #444; border-radius: 5px; overflow: hidden; flex: none; }
.renderg .sn { width: 19px; border-right: 1px solid #444; }

/* timeline */
.timeline { height: 42px; flex: none; position: relative; background:
  linear-gradient(to right, rgba(0,0,0,.2) 171px, transparent 171px, transparent 903px, rgba(0,0,0,.2) 903px),
  linear-gradient(to right, transparent 57.300px, #5b5b5b 57.300px) -34.300px 0 / 58.300px 100%,
  linear-gradient(to right, transparent 57.300px, #6b6b6b 57.300px) -5.200px 0 / 58.300px 100%,
  #747474; border-top: 1px solid #8a8a8a; border-bottom: 2px solid #7a7a7a; }
.playhead { position: absolute; left: 171px; top: 0; bottom: 0; width: 2px; background: #4fc43a; }
.tlcorner { position: absolute; right: 0; top: 0; width: 13px; height: 13px; clip-path: polygon(0 0, 100% 0, 100% 100%); }
.ruler { height: 16px; flex: none; position: relative; background: #737373; }
.rbar { position: absolute; left: 4px; right: 4px; top: 0; height: 12px; border: 1px solid #3f3f3f; border-radius: 7px; background: linear-gradient(#7a7a7a, #949494); }
.rbar::before, .rbar::after { content: ""; position: absolute; top: 1px; width: 8px; height: 8px; border-radius: 50%; background: #5f5f5f; }
.rbar::before { left: 2px; }
.rbar::after { right: 2px; }
.rlabels { position: relative; display: flex; padding-left: 23px; height: 12px; align-items: center; }
.rlabels span { width: 58.270px; flex: none; text-align: center; }
.keying { margin-left: 0; }
.numh { display: flex; height: 19px; border: 1px solid #3a3a3a; border-radius: 10px; overflow: hidden; flex: none; }
.numh .num { border-bottom: 0; flex: 1; height: 100%; }
.range { width: 227px; margin-left: 6px; }
.range .num:first-child { border-right: 1px solid #333; }
.cur { width: 89px; margin-left: 5px; }
.transport { display: flex; width: 118px; height: 19px; margin-left: 18px; border: 1px solid #3a3a3a; border-radius: 5px; overflow: hidden; flex: none; }
.transport span { flex: 1; display: flex; align-items: center; justify-content: center; background: linear-gradient(#989898, #7f7f7f); border-right: 1px solid #444; }
.transport span:last-child { border-right: 0; }
.transport svg { width: 16px; height: 16px; }
.sync { width: 111px; margin-left: 6px; }
.recg { display: flex; width: 38px; height: 19px; margin-left: 17px; border: 1px solid #444; border-radius: 5px; overflow: hidden; flex: none; }
.rec { flex: 1; display: flex; align-items: center; justify-content: center; background: linear-gradient(#989898, #7e7e7e); border-right: 1px solid #444; }
.rec i { width: 10px; height: 10px; border-radius: 50%; background: #e2481b; box-shadow: 0 0 0 1px #f5b6a0; }
.keyf { display: flex; margin-left: 7px; width: 123px; height: 19px; border: 1px solid #444; border-radius: 5px 0 0 5px; overflow: hidden; flex: none; }
.kname { flex: 1; background: linear-gradient(#8c8c8c, #a8a8a8); padding-left: 3px; display: flex; align-items: center; }
.kend { width: 18px; flex: none; background: linear-gradient(#8c8c8c, #a8a8a8); border-left: 1px solid #444; display: flex; align-items: center; }

/* right side */
.scenes { width: 110px; margin-left: 0; }
.tree { height: 66px; flex: none; overflow: hidden; position: relative; background: linear-gradient(#3f3f3f, #3f3f3f) 28px 0 / 1px 100% no-repeat, #6c6c6c; }
.trow { height: 20px; display: grid; grid-template-columns: 40px 21px 50px 94px 21px 20px 20px; align-items: center; background: #717171; }
.trow.first { margin-top: -7px; grid-template-columns: 40px 21px 79px 65px 21px 20px 20px; }
.trow.alt { background: transparent; }
.trow.act { background: #7a7a7a; }
.trow > .ic { width: 18px; height: 18px; }
.exp { width: 10px; height: 10px; border-radius: 50%; border: 1px solid #222; background: #bbb; justify-self: start; margin-left: 24px; position: relative; }
.exp::after { content: "+"; position: absolute; left: 0; right: 0; top: -1px; text-align: center; font-size: 9px; line-height: 10px; }
.exp.e2 { margin-left: 29px; }
.exp.none { visibility: hidden; }
.nm { white-space: nowrap; }
.nm.wh { color: #f4f4f4; }
.ex { display: flex; align-items: center; height: 20px; }
.sepv { width: 1px; height: 12px; background: #444; margin-right: 8px; }
.halo { width: 18px; height: 18px; border-radius: 50%; background: #9a9a9a; display: flex; align-items: center; justify-content: center; }
.halo .ic { width: 14px; height: 14px; }
.mesh { margin-right: 0; }
.rc { height: 20px; border-left: 1px solid #656565; display: flex; align-items: center; justify-content: flex-start; padding-left: 1px; }
.treescroll { position: absolute; right: 2px; top: 4px; width: 13px; height: 54px; border-radius: 7px; background: #5c5c5c; padding: 1px; }
.treescroll i { display: block; width: 11px; height: 14px; margin-top: 6px; border-radius: 6px; background: #999; }
.hbar { height: 16px; flex: none; padding: 3px 39px 0 5px; background: #6d6d6d; border-bottom: 1px solid #0c0c0c; }
.hthumb { width: 235px; height: 11px; border-radius: 6px; background: linear-gradient(#9a9a9a, #7c7c7c); box-shadow: 20px 0 0 0 #5c5c5c; }
.tabs { display: flex; margin-left: 6px; width: 176px; height: 19px; border: 1px solid #2e2e2e; border-radius: 5px; overflow: hidden; flex: none; }
.tabs span { flex: 1; display: flex; align-items: center; justify-content: center; background: linear-gradient(#585858, #3c3c3c); border-right: 1px solid #2e2e2e; }
.tabs span:last-child { border-right: 0; }
.tabs span.act { background: linear-gradient(#5b8fd6, #4670b0); }
.props { flex: 1; position: relative; padding-top: 7px; }
.crumbs { height: 20px; display: flex; align-items: center; }
.crumbs .ic { width: 15px; height: 15px; }
.pinp { margin-left: 10px; }
.scn { margin-left: 7px; }
.crumbarrow { border: 3px solid transparent; border-left: 4px solid #3c3c3c; border-right: 0; margin-left: 7px; flex: none; }
.crumbs .cb { margin-left: 15px; }
.cname { margin-left: 2px; }
.c1 { width: 44px; }
.a2 { margin-left: 10px; }
.crumbs .cb2 { margin-left: 15px; }
.namerow { display: flex; margin: 16px 0 0 9px; width: 155px; height: 19px; border: 1px solid #3a3a3a; border-radius: 5px; overflow: hidden; }
.nico { width: 30px; background: linear-gradient(#565656, #3a3a3a); display: flex; align-items: center; justify-content: center; }
.nfield { width: 104px; padding-left: 4px; background: linear-gradient(#adadad, #8b8b8b); border-right: 1px solid #333; display: flex; align-items: center; }
.nf { flex: 1; background: linear-gradient(#969696, #7e7e7e); display: flex; align-items: center; justify-content: center; }
.panel { margin: 11px 0 0 5px; width: 254px; padding: 1px 3px 0; border-top: 1px solid #484848; }
.pr { margin-left: -3px; padding-left: 20px; padding-top: 3px; }
.pr .tdown { left: 5px; top: 5px; }
.disp, .cust { margin-top: 10px; }
.seg { display: flex; margin-top: 8px; height: 19px; border: 1px solid #2e2e2e; border-radius: 5px; overflow: hidden; color: #efefef; }
.seg span { display: flex; align-items: center; justify-content: center; }
.s-on { width: 122px; color: #14305e; background: linear-gradient(#5d93dd, #4a78bd); border-right: 1px solid #2e2e2e; }
.s-off { flex: 1; background: linear-gradient(#3c3c3c, #535353); }
.cols { display: grid; grid-template-columns: 119px 120px; column-gap: 9px; }
.c6 { margin-top: 6px; }
.c5 { margin-top: 5px; }
.c4 { margin-top: 4px; }
.c8 { margin-top: 7px; }
.pill .num { height: 17px; }
.p20 .num { height: 18px; }
.duo .num { height: 19px; }
.duo .num:last-child { height: 18px; }
.full { width: 100%; }
.pano { margin: 6px 0 0 3px; }
.plbl { height: 20px; display: flex; align-items: center; padding-left: 5px; }
.dof { margin-top: 6px; }
.objf { height: 20px; border: 1px solid #3a3a3a; border-radius: 4px; background: linear-gradient(#8b8b8b, #a8a8a8); padding-left: 3px; display: flex; align-items: center; }
.objf .ic { width: 15px; height: 15px; }
.colv { display: flex; flex-direction: column; }
.r22 { height: 22px; margin-left: 3px; }
.comp { margin-top: 2px; }
.cr { padding-top: 2px; }
.pass { margin: 11px 0 0 3px; color: #f0f0f0; }
.chkd { background: linear-gradient(#4a4a4a, #606060); }
.alpha { height: 19px; margin-top: 2px; border: 1px solid #3a3a3a; border-radius: 10px; display: flex; align-items: center; justify-content: center; background: linear-gradient(to right, #5a5a5a 53%, #a3a3a3 53%); }
```
